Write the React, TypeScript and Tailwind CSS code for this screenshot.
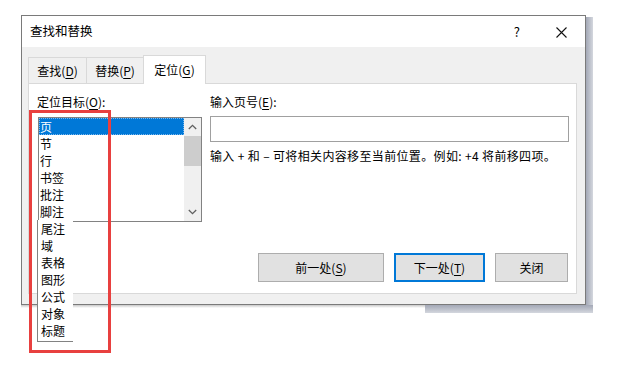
import React from 'react'

const font = { fontFamily: '"Noto Sans CJK SC", "Noto Sans", sans-serif' }

const items = ['页', '节', '行', '书签', '批注', '脚注', '尾注', '域', '表格', '图形', '公式', '对象', '标题']

const Key = ({ children }: { children: React.ReactNode }) => (
  <span className="underline underline-offset-2 decoration-1">{children}</span>
)

const Tab = ({ label, k, active, w }: { label: string; k: string; active?: boolean; w: string }) => (
  <div
    className={
      active
        ? `${w} h-[29px] -mb-px bg-white border border-b-0 border-[#d9d9d9] flex items-center justify-center relative z-10`
        : `${w} h-[26px] border-l border-t border-[#d9d9d9] flex items-center justify-center`
    }
  >
    <span>
      {label}(<Key>{k}</Key>)
    </span>
  </div>
)

const Btn = ({ children, w, focus }: { children: React.ReactNode; w: string; focus?: boolean }) => (
  <button
    className={`${w} h-[29px] bg-[#e1e1e1] flex items-center justify-center ${
      focus ? 'border-2 border-[#0078d7]' : 'border border-[#adadad]'
    }`}
  >
    {children}
  </button>
)

const App = () => {
  return (
    <div className="relative w-[621px] h-[387px] bg-white pl-[21px] pt-[15px] text-[12px] text-black leading-none" style={font}>
      {/* window shadow */}
      <div className="absolute left-[586px] top-[17px] w-[7px] h-[296px] bg-gradient-to-r from-[#a3a8b6] to-[#d4d7de]" />
      <div className="absolute left-[425px] top-[305px] w-[168px] h-[8px] bg-gradient-to-b from-[#a3a8b6] to-[#d4d7de]" />
      <div className="absolute left-[21px] top-[305px] w-[404px] h-[3px] bg-gradient-to-b from-[#c8c8c8] to-white" />

      {/* dialog */}
      <div className="relative w-[565px] h-[290px] border border-[#7a7a7a] bg-[#f0f0f0] flex flex-col">
        <div className="h-[31px] bg-white flex items-center pl-[8px] pr-[18px] shrink-0">
          <span className="text-[12.5px]">查找和替换</span>
          <span className="ml-auto mr-[36px] text-[13px]">?</span>
          <svg width="11" height="11" viewBox="0 0 11 11" className="mt-px">
            <path d="M0.5 0.5 L10.5 10.5 M10.5 0.5 L0.5 10.5" stroke="#111" strokeWidth="1.1" />
          </svg>
        </div>

        <div className="flex-1 flex flex-col pt-[8px] pl-[6px] pr-[8px] pb-[10px]">
          <div className="flex items-end h-[28px]">
            <Tab label="查找" k="D" w="w-[58px]" />
            <Tab label="替换" k="P" w="w-[57px]" />
            <Tab label="定位" k="G" w="w-[63px]" active />
          </div>

          <div className="flex-1 bg-white border border-[#d9d9d9] flex flex-col pt-[12px] pl-[8px] pr-[7px] pb-[11px]">
            <div className="flex gap-[9px]">
              <div className="flex flex-col w-[164px]">
                <div className="h-[14px]">
                  定位目标(<Key>O</Key>):
                </div>
                <div className="relative ml-px mt-[7px] w-[164px] h-[105px] border border-[#828282] flex items-start">
                  <div className="flex-1 flex flex-col z-20">
                    {items.map((t, i) =>
                      i === 0 ? (
                        <div
                          key={t}
                          className="shrink-0 h-[17px] bg-[#0078d7] text-white flex items-center pl-[1px] outline outline-1 outline-dotted outline-offset-[-1px] outline-[#7ab8ee]"
                        >
                          {t}
                        </div>
                      ) : i < 6 ? (
                        <div key={t} className="shrink-0 h-[17px] flex items-center pl-[1px]">
                          {t}
                        </div>
                      ) : (
                        <div
                          key={t}
                          className={`shrink-0 w-[36px] -ml-[2px] pl-[3px] bg-white border-l border-[#828282] flex ${
                            i === items.length - 1 ? 'border-b h-[20px] items-start pt-[3px]' : 'h-[17px] items-center'
                          }`}
                        >
                          {t}
                        </div>
                      )
                    )}
                  </div>
                  <div className="w-[17px] h-full bg-[#f0f0f0] flex flex-col items-center shrink-0">
                    <div className="h-[18px] flex items-center justify-center">
                      <svg width="9" height="6" viewBox="0 0 9 6">
                        <path d="M0.8 5 L4.5 1.3 L8.2 5" fill="none" stroke="#606060" strokeWidth="1.3" />
                      </svg>
                    </div>
                    <div className="w-full h-[30px] bg-[#cdcdcd]" />
                    <div className="mt-auto h-[18px] flex items-center justify-center">
                      <svg width="9" height="6" viewBox="0 0 9 6">
                        <path d="M0.8 1 L4.5 4.7 L8.2 1" fill="none" stroke="#606060" strokeWidth="1.3" />
                      </svg>
                    </div>
                  </div>
                </div>
              </div>

              <div className="flex-1 flex flex-col">
                <div className="h-[14px]">
                  输入页号(<Key>E</Key>):
                </div>
                <div className="mt-[6px] w-[359px] h-[26px] border border-[#a0a0a0] bg-white" />
                <div className="mt-[8px] whitespace-pre tracking-[0.35px]">输入 + 和 – 可将相关内容移至当前位置。例如: +4 将前移四项。</div>
              </div>
            </div>

            <div className="mt-auto flex justify-end gap-[10px] pr-px">
              <Btn w="w-[126px]">
                <span>
                  前一处(<Key>S</Key>)
                </span>
              </Btn>
              <Btn w="w-[91px]" focus>
                <span>
                  下一处(<Key>T</Key>)
                </span>
              </Btn>
              <Btn w="w-[73px]">关闭</Btn>
            </div>
          </div>
        </div>
      </div>

      {/* red highlight box */}
      <div className="absolute left-[29px] top-[110px] w-[82px] h-[243px] border-[3px] border-[#e8403f] z-30" />
    </div>
  )
}

export default App
